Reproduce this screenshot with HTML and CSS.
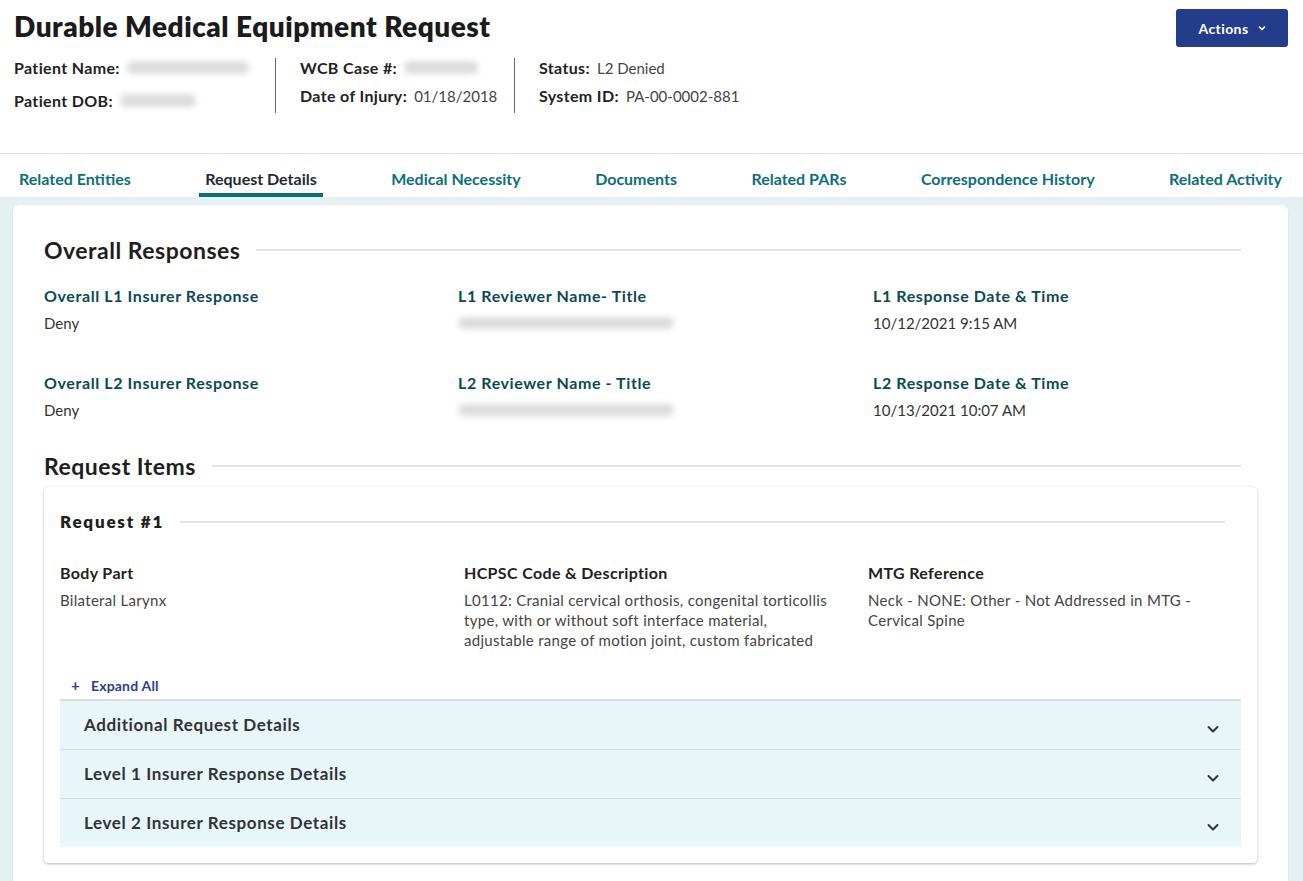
FILE: index.html
```html
<!DOCTYPE html>
<html lang="en">
<head>
<meta charset="utf-8">
<title>Durable Medical Equipment Request</title>
<link rel="stylesheet" href="styles.css">
</head>
<body>
<header class="page-header">
  <div class="header-top">
    <h1 class="title">Durable Medical Equipment Request</h1>
    <button class="actions-btn">Actions
      <svg width="10" height="10" viewBox="0 0 10 10"><path d="M2.5 4 L5 6.5 L7.5 4" fill="none" stroke="#fff" stroke-width="1.6" stroke-linecap="round" stroke-linejoin="round"/></svg>
    </button>
  </div>
  <div class="info">
    <div class="info-col info-col-first">
      <div class="info-row"><span class="info-label">Patient Name:</span><span class="blur blur-w130"></span></div>
      <div class="info-row"><span class="info-label">Patient DOB:</span><span class="blur blur-w78"></span></div>
    </div>
    <div class="info-col info-col-mid">
      <div class="info-row"><span class="info-label">WCB Case #:</span><span class="blur blur-w74"></span></div>
      <div class="info-row"><span class="info-label">Date of Injury:</span><span class="info-value">01/18/2018</span></div>
    </div>
    <div class="info-col info-col-last">
      <div class="info-row"><span class="info-label">Status:</span><span class="info-value">L2 Denied</span></div>
      <div class="info-row"><span class="info-label">System ID:</span><span class="info-value">PA-00-0002-881</span></div>
    </div>
  </div>
</header>

<nav class="tabs">
  <a class="tab">Related Entities</a>
  <a class="tab tab-active">Request Details</a>
  <a class="tab">Medical Necessity</a>
  <a class="tab">Documents</a>
  <a class="tab">Related PARs</a>
  <a class="tab">Correspondence History</a>
  <a class="tab">Related Activity</a>
</nav>

<main class="main">
  <section class="card">
    <div class="section-head"><h2>Overall Responses</h2><span class="rule"></span></div>
    <div class="grid3 resp-grid">
      <div class="field">
        <div class="field-label">Overall L1 Insurer Response</div>
        <div class="field-value">Deny</div>
      </div>
      <div class="field">
        <div class="field-label">L1 Reviewer Name- Title</div>
        <div class="field-value"><span class="blur blur-w218"></span></div>
      </div>
      <div class="field">
        <div class="field-label">L1 Response Date &amp; Time</div>
        <div class="field-value">10/12/2021 9:15 AM</div>
      </div>
      <div class="field">
        <div class="field-label">Overall L2 Insurer Response</div>
        <div class="field-value">Deny</div>
      </div>
      <div class="field">
        <div class="field-label">L2 Reviewer Name - Title</div>
        <div class="field-value"><span class="blur blur-w218"></span></div>
      </div>
      <div class="field">
        <div class="field-label">L2 Response Date &amp; Time</div>
        <div class="field-value">10/13/2021 10:07 AM</div>
      </div>
    </div>

    <div class="section-head section-head-items"><h2>Request Items</h2><span class="rule"></span></div>

    <div class="item-card">
      <div class="item-head"><h3>Request #1</h3><span class="rule"></span></div>
      <div class="item-grid">
        <div class="field">
          <div class="item-label">Body Part</div>
          <div class="item-value">Bilateral Larynx</div>
        </div>
        <div class="field">
          <div class="item-label">HCPSC Code &amp; Description</div>
          <div class="item-value">L0112: Cranial cervical orthosis, congenital torticollis type, with or without soft interface material, adjustable range of motion joint, custom fabricated</div>
        </div>
        <div class="field">
          <div class="item-label">MTG Reference</div>
          <div class="item-value">Neck - NONE: Other - Not Addressed in MTG - Cervical Spine</div>
        </div>
      </div>
      <button class="expand-all"><span class="plus">+</span>Expand All</button>
      <div class="accordion">
        <div class="acc-row"><span>Additional Request Details</span>
          <svg width="14" height="14" viewBox="0 0 14 14"><path d="M2.5 5 L7 9.5 L11.5 5" fill="none" stroke="#333" stroke-width="2" stroke-linecap="round" stroke-linejoin="round"/></svg></div>
        <div class="acc-row"><span>Level 1 Insurer Response Details</span>
          <svg width="14" height="14" viewBox="0 0 14 14"><path d="M2.5 5 L7 9.5 L11.5 5" fill="none" stroke="#333" stroke-width="2" stroke-linecap="round" stroke-linejoin="round"/></svg></div>
        <div class="acc-row"><span>Level 2 Insurer Response Details</span>
          <svg width="14" height="14" viewBox="0 0 14 14"><path d="M2.5 5 L7 9.5 L11.5 5" fill="none" stroke="#333" stroke-width="2" stroke-linecap="round" stroke-linejoin="round"/></svg></div>
      </div>
    </div>
  </section>
</main>
</body>
</html>
```

FILE: styles.css
```css
* { box-sizing: border-box; }
html, body { margin: 0; padding: 0; }
body {
  font-family: "Lato", "Liberation Sans", sans-serif;
  color: #333;
  background: #fff;
  width: 1303px;
  overflow: hidden;
}

.page-header { padding: 9px 15px 0 14px; height: 153px; }
.header-top { display: flex; justify-content: space-between; align-items: flex-start; }
.title {
  margin: 1px 0 0 0;
  font-size: 28px;
  font-weight: 800;
  color: #1b1b1b;
  letter-spacing: 0.5px;
  line-height: 32px;
}
.actions-btn {
  width: 112px;
  height: 38px;
  background: #233d8c;
  color: #fff;
  border: none;
  border-radius: 3px;
  font-family: inherit;
  font-size: 14px;
  font-weight: 700;
  letter-spacing: 0.4px;
  display: flex;
  align-items: center;
  justify-content: center;
  gap: 9px;
  padding: 0 0 0 2px;
}

.info { display: flex; margin-top: 11px; }
.info-col { display: flex; flex-direction: column; }
.info-col-first { width: 262px; border-right: 1px solid #666; gap: 14px; height: 55px; }
.info-col-mid { width: 239px; padding-left: 24px; border-right: 1px solid #666; gap: 9px; height: 55px; }
.info-col-last { padding-left: 24px; gap: 9px; }
.info-row { display: flex; align-items: center; height: 19px; font-size: 15px; }
.info-label { font-weight: 700; color: #222; margin-right: 7px; font-size: 16px; letter-spacing: 0.35px; }
.info-value { color: #444; font-size: 15px; }

.blur {
  display: inline-block;
  height: 13px;
  border-radius: 6px;
  background: #cfcfcf;
  filter: blur(3px);
  opacity: 0.75;
}
.blur-w130 { width: 122px; }
.blur-w78 { width: 76px; }
.blur-w74 { width: 74px; }
.blur-w218 { width: 216px; height: 12px; margin-top: 4px; }

.tabs {
  display: flex;
  justify-content: space-between;
  border-top: 1px solid #e3e3e3;
  padding: 0 15px 0 13px;
  height: 44px;
}
.tab {
  display: flex;
  align-items: center;
  padding: 10px 6px 0 6px;
  font-size: 16px;
  font-weight: 700;
  color: #0d6f79;
  border-bottom: 4px solid transparent;
}
.tab-active { color: #1f2a33; border-bottom-color: #0a6f79; }

.main {
  background: #e4f0f2;
  padding: 8px 15px 0 13px;
}
.card {
  background: #fff;
  border-radius: 6px 6px 0 0;
  box-shadow: 0 1px 2px rgba(0,0,0,0.12);
  padding: 30px 31px 18px 31px;
}

.section-head { display: flex; align-items: center; gap: 16px; padding-right: 16px; }
.section-head h2 {
  margin: 0;
  font-size: 23px;
  font-weight: 700;
  color: #1e1e1e;
  letter-spacing: 0.5px;
  line-height: 30px;
}
.rule { flex: 1; height: 2px; background: #e4e4e4; }

.grid3 { display: grid; grid-template-columns: 414px 415px 1fr; }
.resp-grid { margin-top: 21px; row-gap: 40px; }
.field-label { font-size: 16px; font-weight: 700; color: #0b4a55; line-height: 20px; letter-spacing: 0.6px; }
.field-value { font-size: 15px; color: #333; margin-top: 7px; line-height: 20px; height: 20px; }

.section-head-items { margin-top: 31px; }
.item-card {
  margin-top: 6px;
  border-radius: 4px;
  box-shadow: 0 1px 3px rgba(0,0,0,0.28), 0 0 1px rgba(0,0,0,0.08);
  padding: 22px 16px 16px 16px;
}
.item-head { display: flex; align-items: center; gap: 16px; padding-right: 16px; }
.item-head h3 {
  margin: 0;
  font-size: 17px;
  font-weight: 800;
  letter-spacing: 1.8px;
  color: #1e1e1e;
  line-height: 26px;
}
.item-grid { display: grid; grid-template-columns: 404px 404px 1fr; margin-top: 28px; }
.item-label { font-size: 16px; font-weight: 700; color: #222; line-height: 20px; letter-spacing: 0.35px; }
.item-value { font-size: 15px; color: #444; margin-top: 7px; line-height: 20px; padding-right: 36px; letter-spacing: 0.3px; }

.expand-all {
  margin-top: 25px;
  background: none;
  border: none;
  padding: 0 0 0 11px;
  font-family: inherit;
  font-size: 14px;
  font-weight: 700;
  color: #2a3f8f;
  letter-spacing: 0.2px;
  display: flex;
  align-items: center;
  height: 20px;
}
.plus { font-size: 15px; margin-right: 11px; font-weight: 700; }

.accordion { margin-top: 4px; border-top: 2px solid #dedede; }
.acc-row {
  display: flex;
  justify-content: space-between;
  align-items: center;
  height: 49px;
  background: #e8f6fa;
  padding: 0 21px 2px 24px;
  font-size: 17px;
  font-weight: 700;
  color: #333;
  letter-spacing: 0.6px;
  border-bottom: 1px solid #d8d8d8;
}
.acc-row:last-child { border-bottom: none; height: 48px; }
.acc-row svg { margin-top: 10px; }
```
